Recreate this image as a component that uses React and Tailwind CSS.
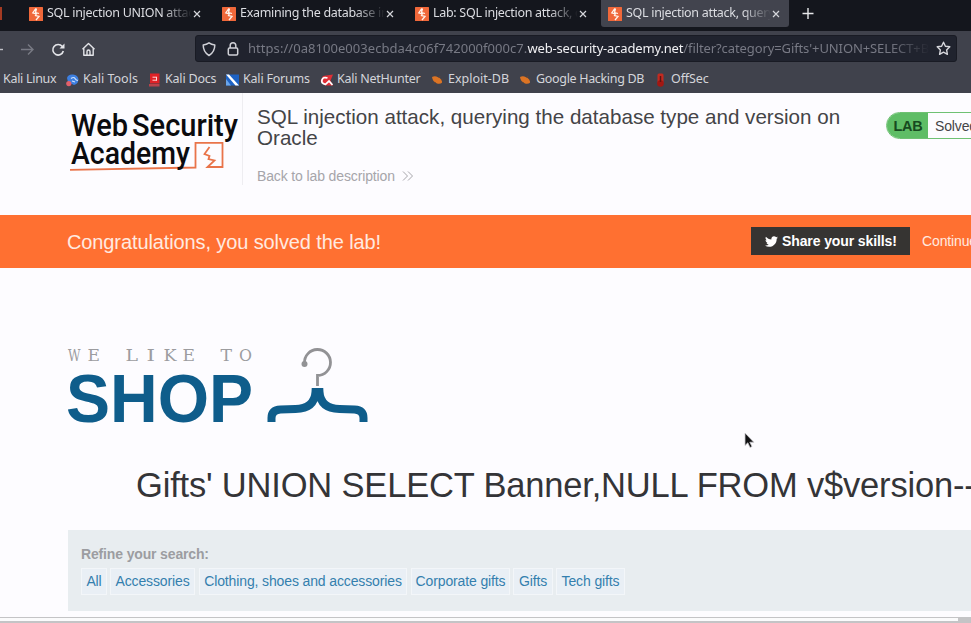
import React from "react";
import { FaTwitter } from "react-icons/fa";

const tabs = [
  { title: "SQL injection UNION attack" },
  { title: "Examining the database in" },
  { title: "Lab: SQL injection attack, q" },
  { title: "SQL injection attack, query", active: true },
];

const bookmarks = [
  { label: "Kali Tools", icon: "tools", width: "w-[82px]", tracking: "tracking-[0px]" },
  { label: "Kali Docs", icon: "docs", width: "w-[78px]", tracking: "tracking-[-0.2px]" },
  { label: "Kali Forums", icon: "forums", width: "w-[94px]", tracking: "tracking-[-0.2px]" },
  { label: "Kali NetHunter", icon: "nethunter", width: "w-[111px]", tracking: "tracking-[-0.25px]" },
  { label: "Exploit-DB", icon: "bug", width: "w-[88px]", tracking: "tracking-[0px]" },
  { label: "Google Hacking DB", icon: "bug", width: "w-[135px]", tracking: "tracking-[-0.32px]" },
  { label: "OffSec", icon: "offsec", width: "w-[70px]", tracking: "tracking-[-0.1px]" },
];

const categories = [
  { label: "All", width: "w-[26px]", gap: "mr-[3px]" },
  { label: "Accessories", width: "w-[85px]", gap: "mr-[4px]" },
  { label: "Clothing, shoes and accessories", width: "w-[208px]", gap: "mr-[4px]" },
  { label: "Corporate gifts", width: "w-[99px]", gap: "mr-[3px]" },
  { label: "Gifts", width: "w-[40px]", gap: "mr-[3px]" },
  { label: "Tech gifts", width: "w-[69px]", gap: "" },
];

// Letter, left edge and drawn width of the typewriter line above SHOP.
const tagline = [
  ["W", 1, 12.5],
  ["E", 20.5, 12.5],
  ["L", 58.5, 12.5],
  ["I", 79.5, 8.5],
  ["K", 96.5, 13],
  ["E", 115.5, 12.5],
  ["T", 153.5, 11.5],
  ["O", 172, 13],
];

function Favicon() {
  return (
    <svg className="h-[14px] w-[14px] shrink-0" viewBox="0 0 14 14">
      <rect width="14" height="14" rx="0.5" fill="#f0683a" />
      <path d="M6.800 1.500 3.800 6l3.400 1-.7 1.600 3.500.8L7 13M7.500 1.500 6.500 5.500l3.500 1" fill="none" stroke="#fff3ec" strokeWidth="1.300" />
    </svg>
  );
}

function BookmarkIcon({ kind }) {
  return (
    <svg className="h-[14px] w-[13px] shrink-0" viewBox="0 0 13 14">
      {kind === "tools" && (
        <g>
          <path d="M1 5Q2 1 7 1.5q5 .5 5.500 5Q12 11 8 12L2 9Z" fill="#3d7fe0" />
          <path d="M5 5.500q3-2 4 0t3 2M6 8l3 1" stroke="#cfe1fb" strokeWidth="1.200" fill="none" />
          <circle cx="2.800" cy="10.600" r="2.600" fill="#e2606a" />
        </g>
      )}
      {kind === "docs" && (
        <g>
          <path d="M2 .500h9.500v10H2z" fill="#e02227" />
          <path d="M1 11h10.500v2.500H1z" fill="#b9424a" />
          <path d="M4.500 4.200h4.500M4.500 7.200H9M8.500 4v3.500" stroke="#ffd9d9" strokeWidth="1" />
        </g>
      )}
      {kind === "forums" && (
        <g>
          <path d="M0 1.500h13v11H0z" fill="#1d62c4" />
          <path d="M0 1.500h3L13 12.500h-3.500Z" fill="#fff" />
          <path d="M0 6v6.500h5Z" fill="#6aa5ea" />
        </g>
      )}
      {kind === "nethunter" && (
        <g>
          <path d="M3 3 13 1.500 10.500 7.500l2.500 5H5L.500 8Z" fill="#e02f36" />
          <path d="M7.500 5Q3 3.500 2 7t3.500 4.300L9 8l3.500 4" stroke="#fff" strokeWidth="1.800" fill="none" />
        </g>
      )}
      {kind === "bug" && (
        <g>
          <path d="M1 4q3-1.600 6 .2 4.500 2 4 5.500-2 1.800-5 .8Q1.500 8.500 1 4Z" fill="#dc7424" />
          <path d="M3 10.500 4.500 9M9 3 8 5M11.500 6 10 7" stroke="#6b4430" strokeWidth="1" />
        </g>
      )}
      {kind === "offsec" && (
        <g>
          <rect x="3.500" y="0.500" width="6" height="10" rx="1.500" fill="#c22a20" />
          <circle cx="6.500" cy="10.500" r="3.300" fill="#a31712" />
          <path d="M6.500 3v6" stroke="#5d1411" strokeWidth="1.500" />
        </g>
      )}
    </svg>
  );
}

function TabStrip() {
  return (
    <div className="flex h-[31px] bg-[#14161d]">
      <div className="mt-[7px] mr-[20px] h-[13px] w-[2px] shrink-0 bg-[#a43a22]" />
      {tabs.map((t) => (
        <div
          key={t.title}
          className={
            "mr-[5px] flex h-[27px] w-[188px] shrink-0 items-center rounded-b-[3px] pl-[7px] " +
            (t.active ? "bg-[#42444e]" : "")
          }
        >
          <Favicon />
          <div className="ml-[4px] w-[145px] overflow-hidden whitespace-nowrap text-[12.500px] tracking-[-0.300px] text-[#dcdde2] [mask-image:linear-gradient(to_right,#000_80%,transparent_100%)]">
            {t.title}
          </div>
          <svg className="ml-[1px] h-[8px] w-[8px] shrink-0" viewBox="0 0 8 8">
            <path d="m1 1 6 6M7 1 1 7" stroke="#d5d6db" strokeWidth="1.200" />
          </svg>
        </div>
      ))}
      <svg className="mt-[8px] ml-[8px] h-[11px] w-[12px] shrink-0" viewBox="0 0 12 11">
        <path d="M6 0v11M.500 5.500h11" stroke="#e6e7ea" strokeWidth="1.400" />
      </svg>
    </div>
  );
}

function AddressRow() {
  return (
    <div className="flex h-[35px] items-center">
      <svg className="h-[20px] w-[195px] shrink-0" viewBox="0 0 195 20" fill="none">
        <path d="M0 10.500h3" stroke="#c0c1c8" strokeWidth="1.400" />
        <path d="M21 10.500h12M28 5.500l5 5-5 5" stroke="#787a84" strokeWidth="1.400" />
        <path d="M62.300 7.500a5.300 5.300 0 1 0 1 4.500" stroke="#e3e4e8" strokeWidth="1.600" />
        <path d="M64.500 4.500v5h-5z" fill="#e3e4e8" />
        <path d="M82.500 10.200 88.500 4.500l6 5.700M83.800 9.500v6.700h9.400V9.500M87 16v-3.500a1.500 1.500 0 0 1 3 0V16" stroke="#e3e4e8" strokeWidth="1.400" strokeLinejoin="round" />
      </svg>
      <div className="flex h-[27px] w-[762px] shrink-0 items-center rounded-[3px] border border-[#191b24] bg-[#20232e] pl-[6px]">
        <svg className="h-[16px] w-[38px] shrink-0" viewBox="0 0 38 16" fill="none" stroke="#d0d1d7" strokeWidth="1.500">
          <path d="M7 1.800q2.500 1.700 5.800 2.200 0 7-5.800 10.500Q1.200 11 1.200 4 4.500 3.500 7 1.800Z" strokeLinejoin="round" />
          <rect x="26.300" y="7" width="9.400" height="7" rx="1.200" />
          <path d="M28.200 7V4.500a2.800 2.800 0 0 1 5.600 0V7" />
        </svg>
        <div className="ml-[8px] w-[682px] overflow-hidden whitespace-nowrap text-[13px] tracking-[0.050px] text-[#777984] [mask-image:linear-gradient(to_right,#000_94%,transparent_100%)]">
          https://0a8100e003ecbda4c06f742000f000c7.
          <span className="tracking-[-0.160px] text-[#f0f0f3]">web-security-academy.net</span>
          <span className="tracking-[-0.100px]">/filter?category=Gifts'+UNION+SELECT+Banner</span>
        </div>
        <svg className="ml-[6px] h-[15px] w-[15px] shrink-0" viewBox="0 0 15 15">
          <path d="m7.500 1.200 1.900 4 4.400.6-3.200 3.100.8 4.400-3.900-2.100-3.900 2.100.8-4.400L1.200 5.800l4.400-.6Z" fill="none" stroke="#d6d7dc" strokeWidth="1.400" strokeLinejoin="round" />
        </svg>
      </div>
    </div>
  );
}

function Bookmarks() {
  return (
    <div className="flex h-[27px] items-center whitespace-nowrap text-[12.500px] text-[#d4d5da]">
      <div className="w-[66px] shrink-0 pl-[3px] tracking-[-0.300px]">Kali Linux</div>
      {bookmarks.map((b) => (
        <div key={b.label} className={"flex shrink-0 items-center gap-[4px] " + b.width}>
          <BookmarkIcon kind={b.icon} />
          <span className={b.tracking}>{b.label}</span>
        </div>
      ))}
    </div>
  );
}

function AcademyLogo() {
  return (
    <svg className="h-[68px] w-[172px] shrink-0" viewBox="0 0 172 68">
      <path d="M2 61.800 127.500 59.500V34.800h27V59H139.500l7-6.500-6-1.500 1-3-5-2 5-7" fill="none" stroke="#e9744a" strokeWidth="1.800" />
      <g fill="#0b0b0e" fontFamily="Roboto, sans-serif" fontSize="32" fontWeight="500">
        <text x="3" y="28" textLength="57" lengthAdjust="spacingAndGlyphs">Web</text>
        <text x="64" y="28" textLength="106" lengthAdjust="spacingAndGlyphs">Security</text>
        <text x="3" y="56" textLength="119" lengthAdjust="spacingAndGlyphs">Academy</text>
      </g>
    </svg>
  );
}

function LabHeader() {
  return (
    <header className="flex h-[122px] items-start pl-[68px] text-[#444447]">
      <div className="flex h-[92px] shrink-0 items-start border-r border-[#eeedf1] pt-[15px] pr-[2px]">
        <AcademyLogo />
      </div>
      <div className="ml-[14px] w-[629px] shrink-0 pt-[13px]">
        <h2 className="w-[610px] text-[20.600px] leading-[21px]">
          SQL injection attack, querying the database type and version on
          <br />
          Oracle
        </h2>
        <div className="mt-[19px] flex items-center text-[14px] leading-[18px] tracking-[-0.130px] text-[#a6a5aa]">
          <span>Back to lab description</span>
          <svg className="ml-[7px] h-[10px] w-[12px]" viewBox="0 0 12 10">
            <path d="m1 .500 4.500 4.500L1 9.500M6 .500 10.500 5 6 9.500" fill="none" stroke="#a6a5aa" />
          </svg>
        </div>
      </div>
      <div className="mt-[19px] flex h-[27px] w-[120px] shrink-0 items-center overflow-hidden rounded-l-full border border-[#6fc173]">
        <div className="flex h-full w-[41px] items-center justify-center bg-[#5fbd66] pt-[3px] pl-[1px] text-[14.500px] font-bold tracking-[-0.300px] text-[#174a20]">LAB</div>
        <div className="pt-[1px] pl-[7px] text-[14px] tracking-[-0.130px]">Solved</div>
      </div>
    </header>
  );
}

function SolvedBanner() {
  return (
    <div className="flex h-[53px] items-center bg-[#ff7031] pl-[67px] text-[#ffeae0]">
      <div className="w-[684px] shrink-0 text-[20px] leading-[28px] tracking-[-0.110px]">Congratulations, you solved the lab!</div>
      <div className="mb-[1px] flex h-[28px] w-[159px] shrink-0 items-center bg-[#363432] pl-[14px] text-[14px] font-bold tracking-[-0.110px] whitespace-nowrap text-white">
        <FaTwitter className="mr-[4px] h-[13px] w-[13px]" />
        Share your skills!
      </div>
      <div className="ml-[12px] text-[14px] tracking-[-0.130px] whitespace-nowrap">Continue learning</div>
    </div>
  );
}

function ShopLogo() {
  return (
    <svg className="h-[84px] w-[306px]" viewBox="0 0 306 84">
      <text y="18" fill="#9c9c9f" fontFamily="DejaVu Serif, serif" fontSize="17.500">
        {tagline.map(([letter, x, width]) => (
          <tspan key={x} x={x} textLength={width} lengthAdjust="spacingAndGlyphs">{letter}</tspan>
        ))}
      </text>
      <text x="-1" y="79" textLength="187" lengthAdjust="spacingAndGlyphs" fill="#0f5d8b" fontFamily="Liberation Sans, sans-serif" fontWeight="700" fontSize="68">SHOP</text>
      <g fill="none">
        <path d="M237.500 20a13 13 0 1 1 13 12.500V43" stroke="#929295" strokeWidth="2.800" />
        <circle cx="237.500" cy="21" r="3" fill="#929295" />
        <path d="M204.500 79v-4q0-8 9-8.500l15-.5q19-.5 20-17h4q1 16.500 20 17l15 .5q9 .5 9 8.500v4" stroke="#0f5d8b" strokeWidth="8" />
      </g>
    </svg>
  );
}

export default function App() {
  return (
    <div className="relative flex h-[623px] w-[971px] flex-col overflow-hidden bg-[#fdfcff] font-['Liberation_Sans',Arial,sans-serif]">
      <div className="h-[93px] shrink-0 bg-[#40424c] font-['Noto_Sans',sans-serif]">
        <TabStrip />
        <AddressRow />
        <Bookmarks />
      </div>
      <LabHeader />
      <SolvedBanner />
      <main className="flex h-[349px] shrink-0 flex-col">
        <div className="pt-[75px] pl-[67px]">
          <ShopLogo />
        </div>
        <h1 className="mt-[38px] ml-[136px] text-[34.500px] leading-[40px] tracking-[-0.180px] whitespace-nowrap text-[#343437]">
          Gifts' UNION SELECT Banner,NULL FROM v$version--
        </h1>
        <section className="mt-[25px] ml-[68px] h-[81px] shrink-0 bg-[#e8edf0] pt-[15px] pl-[13px]">
          <div className="text-[14px] leading-[18px] font-bold tracking-[-0.150px] text-[#9c9da1]">Refine your search:</div>
          <div className="mt-[5px] flex text-[14px] tracking-[-0.130px] text-[#347fae]">
            {categories.map((c) => (
              <a
                key={c.label}
                className={
                  "flex h-[27px] shrink-0 items-center justify-center border border-[#f3f6f9] bg-[#e9eff5] whitespace-nowrap " +
                  c.width + " " + c.gap
                }
              >
                {c.label}
              </a>
            ))}
          </div>
        </section>
      </main>
      <div className="flex h-[6px] shrink-0 border-y border-[#c4c4c6] bg-[#c4c4c6]">
        <div className="w-[958px] border-b border-[#c4c4c6] bg-[#fbfbfc]" />
      </div>
      <svg className="absolute top-[432px] left-[744px] h-[18px] w-[11px]" viewBox="0 0 11 18">
        <path d="M1 1v12.500l2.800-2.700L6 15.500l2-1-2.200-4.300h4Z" fill="#111113" stroke="#c9c8cc" strokeWidth="0.800" />
      </svg>
    </div>
  );
}
